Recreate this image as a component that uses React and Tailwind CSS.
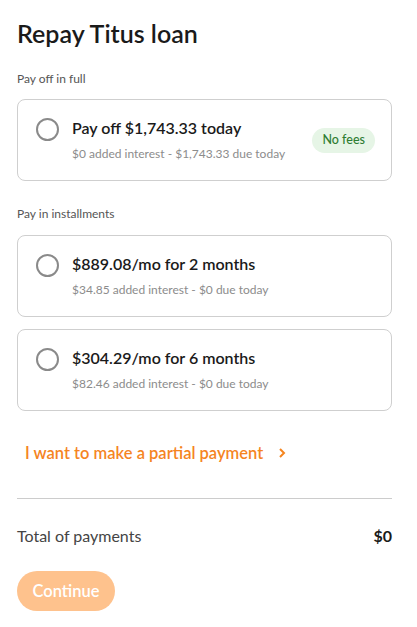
import React from "react";

function Radio() {
  return <div className="w-[23px] h-[23px] rounded-full border-2 border-[#8a8a8a] shrink-0" />;
}

function Option({ title, sub, badge }) {
  return (
    <div className="flex items-center h-[82px] border border-[#cfcfcf] rounded-lg pl-[18px] pr-4">
      <div className="flex items-start flex-1 self-stretch pt-[18px]">
        <Radio />
        <div className="ml-[13px] flex flex-col flex-1">
          <div className="text-[16px] leading-[20px] font-semibold text-[#1a1a1a]">{title}</div>
          <div className="text-[12px] leading-[16px] text-[#8c8c8c] mt-[8px]">{sub}</div>
        </div>
      </div>
      {badge && (
        <div className="h-[25px] px-[10px] rounded-full bg-[#e6f5e6] text-[#2e7d32] text-[12.5px] font-medium flex items-center">
          {badge}
        </div>
      )}
    </div>
  );
}

export default function App() {
  return (
    <div className="w-[417px] h-[627px] bg-white pl-[17px] pr-[25px] pt-[18px] font-['Lato',sans-serif] text-[#1a1a1a]">
      <h1 className="text-[25px] leading-[30px] font-semibold text-[#1a1a1a]">Repay Titus loan</h1>
      <div className="mt-[23px] text-[12px] leading-[16px] text-[#555]">Pay off in full</div>
      <div className="mt-[12px]">
        <Option title="Pay off $1,743.33 today" sub="$0 added interest - $1,743.33 due today" badge="No fees" />
      </div>
      <div className="mt-[25px] text-[12px] leading-[16px] text-[#555]">Pay in installments</div>
      <div className="mt-[13px] flex flex-col gap-[12px]">
        <Option title="$889.08/mo for 2 months" sub="$34.85 added interest - $0 due today" />
        <Option title="$304.29/mo for 6 months" sub="$82.46 added interest - $0 due today" />
      </div>
      <div className="mt-[32px] pl-[8px] flex items-center text-[#f5851f] text-[16.5px] font-semibold leading-[20px]">
        <span>I want to make a partial payment</span>
        <svg className="ml-[14px]" width="10" height="12" viewBox="0 0 10 12" fill="none" stroke="#f5851f" strokeWidth="2">
          <path d="M3 2l4 4-4 4" />
        </svg>
      </div>
      <div className="mt-[35px] border-t border-[#cccccc]" />
      <div className="mt-[26px] flex justify-between items-center text-[16px] leading-[22px]">
        <span className="text-[#444]">Total of payments</span>
        <span className="font-bold text-[#1a1a1a]">$0</span>
      </div>
      <button className="mt-[24px] h-[40px] w-[98px] rounded-full bg-[#fec28d] text-white text-[16.5px] font-semibold">
        Continue
      </button>
    </div>
  );
}
